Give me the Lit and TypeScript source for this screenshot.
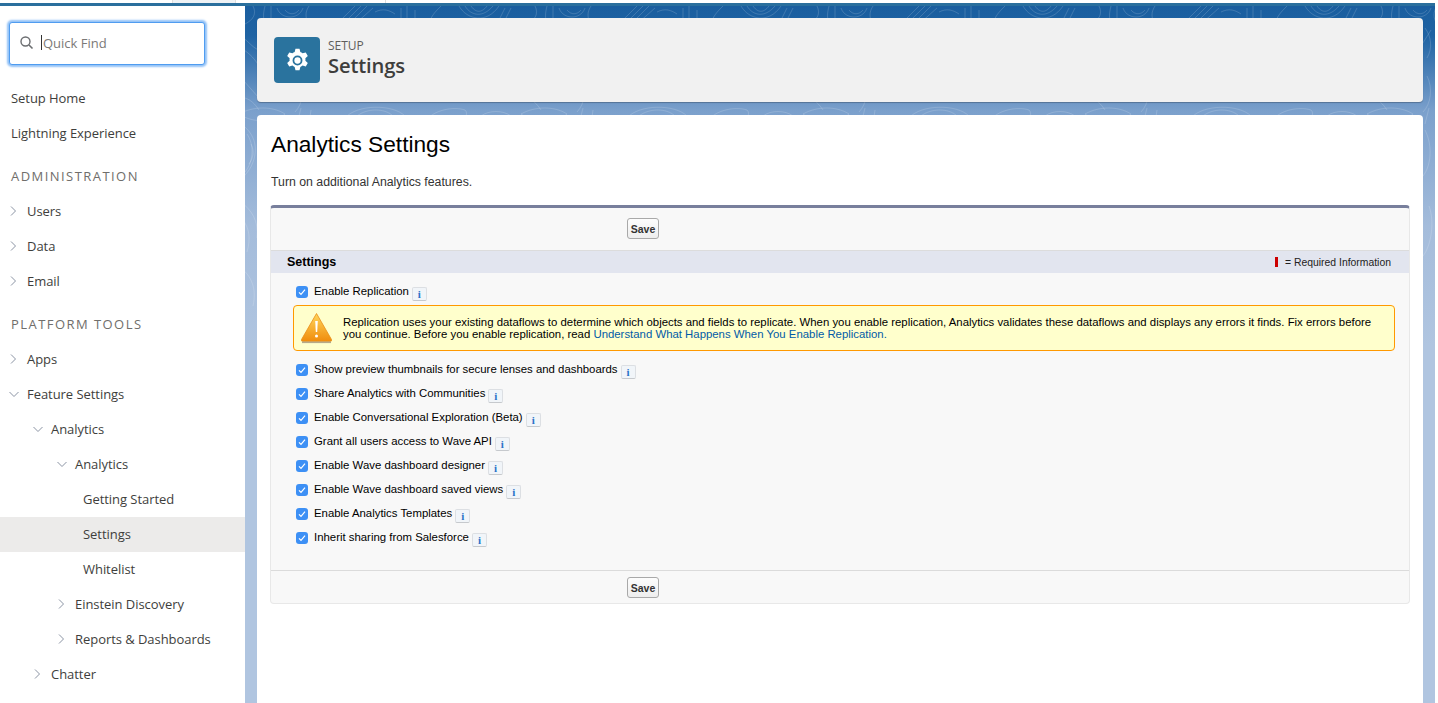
import { LitElement, html, css, svg, nothing } from "lit";
import { customElement } from "lit/decorators.js";

type NavRow = { label: string; level: number; open?: boolean; leaf?: boolean; active?: boolean; heading?: boolean };

const NAV: NavRow[] = [
  { label: "Setup Home", level: 0, leaf: true },
  { label: "Lightning Experience", level: 0, leaf: true },
  { label: "ADMINISTRATION", level: 0, heading: true },
  { label: "Users", level: 0 },
  { label: "Data", level: 0 },
  { label: "Email", level: 0 },
  { label: "PLATFORM TOOLS", level: 0, heading: true },
  { label: "Apps", level: 0 },
  { label: "Feature Settings", level: 0, open: true },
  { label: "Analytics", level: 1, open: true },
  { label: "Analytics", level: 2, open: true },
  { label: "Getting Started", level: 3, leaf: true },
  { label: "Settings", level: 3, leaf: true, active: true },
  { label: "Whitelist", level: 3, leaf: true },
  { label: "Einstein Discovery", level: 2 },
  { label: "Reports & Dashboards", level: 2 },
  { label: "Chatter", level: 1 },
];

const OPTIONS = [
  "Show preview thumbnails for secure lenses and dashboards",
  "Share Analytics with Communities",
  "Enable Conversational Exploration (Beta)",
  "Grant all users access to Wave API",
  "Enable Wave dashboard designer",
  "Enable Wave dashboard saved views",
  "Enable Analytics Templates",
  "Inherit sharing from Salesforce",
];

@customElement("app-root")
export class AppRoot extends LitElement {
  static styles = css`
    :host {
      display: block;
      width: 1438px;
      height: 703px;
      overflow: hidden;
      background: #fff;
      font-family: "Open Sans", "Liberation Sans", sans-serif;
    }
    .tabstrip { display: flex; height: 3px; background: #fff; }
    .tab { width: 62px; margin-left: 172px; background: #eef2f5; border-left: 1px solid #ddd; border-right: 1px solid #ddd; }
    .tab-sep { width: 1px; margin-left: 149px; background: #ddd; }
    .topline { height: 3px; background: #2a6f9d; margin-right: 3px; }
    .layout { display: flex; height: 697px; }

    .sidebar { width: 245px; flex: none; padding-top: 16px; box-sizing: border-box; background: #fff; overflow: hidden; }
    .search {
      display: flex;
      align-items: center;
      width: 196px;
      height: 43px;
      margin: 0 0 16px 9px;
      box-sizing: border-box;
      padding: 0 0 2px 9px;
      background: #fff;
      border: 1px solid #4f9cf0;
      border-radius: 3px;
      box-shadow: 0 0 2px 2px #93c2f7;
      font-size: 13px;
      color: #7b7977;
    }
    .search svg { width: 15px; height: 15px; flex: none; }
    .caret { width: 1px; height: 15px; margin: 0 1px 0 7px; background: #333; }
    .row { display: flex; align-items: center; height: 35px; box-sizing: border-box; padding-bottom: 2px; font-size: 13px; letter-spacing: -0.05px; color: #3e3e3c; white-space: nowrap; }
    .row.active { background: #ecebea; }
    .row svg { width: 8px; height: 10px; flex: none; }
    .lvl-leaf0 { padding-left: 11px; }
    .lvl-0 { padding-left: 9px; }
    .lvl-1 { padding-left: 33px; }
    .lvl-2 { padding-left: 57px; }
    .lvl-3 { padding-left: 83px; }
    .chev { margin-right: 10px; }
    .row.heading { height: 43px; padding: 7px 0 0 11px; font-size: 13px; letter-spacing: 1.45px; color: #706e6b; }

    .main {
      position: relative;
      width: 1190px;
      flex: none;
      box-sizing: border-box;
      padding: 12px 12px 0;
      display: flex;
      flex-direction: column;
      gap: 13px;
      background: linear-gradient(180deg, #1a5e9f 0, #1f63a3 30px, #7ba0cc 105px, #a4bcdb 220px, #b0c5e0 340px);
    }
    .contours { position: absolute; left: 0; top: 0; width: 100%; height: 100%; }
    .page-head {
      position: relative;
      display: flex;
      align-items: center;
      gap: 8px;
      height: 84px;
      flex: none;
      box-sizing: border-box;
      padding-left: 17px;
      background: #f1f1f1;
      border-radius: 4px;
      box-shadow: 0 1px 1px rgba(0, 0, 0, 0.25);
    }
    .head-icon {
      width: 46px;
      height: 46px;
      border-radius: 4px;
      background: #2a739e;
      display: flex;
      align-items: center;
      justify-content: center;
    }
    .head-icon svg { width: 27px; height: 27px; }
    .head-text { padding-bottom: 4px; }
    .eyebrow { font-size: 12px; line-height: 13px; color: #5f5e5c; }
    .head-title { font-size: 20.2px; line-height: 26px; font-weight: 600; letter-spacing: -0.15px; color: #3e3e3c; }

    .content {
      position: relative;
      flex: 1;
      padding: 0 13px 0 14px;
      background: #fff;
      border-radius: 4px 4px 0 0;
      font-family: "Liberation Sans", Arial, sans-serif;
      color: #000;
    }
    h1 { margin: 0; padding-top: 14px; font-size: 22.7px; line-height: 30px; font-weight: 400; }
    .intro { margin: 0; padding-top: 16px; font-size: 12.3px; line-height: 14px; color: #333; }

    .block {
      margin: 16px 0 0 -1px;
      box-sizing: border-box;
      height: 399px;
      background: #f8f8f8;
      border: 1px solid #e8e8e8;
      border-top: 3px solid #787f9c;
      border-radius: 4px;
    }
    .bar { display: flex; height: 43px; box-sizing: border-box; padding: 10px 0 0 356px; border-bottom: 1px solid #dcdcdc; }
    .bar.bottom { height: 33px; padding-top: 6px; border-bottom: none; border-top: 1px solid #dbdbdb; }
    button {
      width: 32px;
      height: 21px;
      padding: 0;
      border: 1px solid #a9a9a9;
      border-radius: 3px;
      background: linear-gradient(#fdfdfd, #eeeeee);
      font: bold 10.5px "Liberation Sans", Arial, sans-serif;
      color: #333;
    }
    .section {
      display: flex;
      align-items: center;
      justify-content: space-between;
      height: 22px;
      padding: 0 18px 0 16px;
      background: #e2e5ef;
    }
    .section h2 { margin: 0; font-size: 12.5px; font-weight: 700; }
    .req { display: flex; align-items: center; gap: 7px; font-size: 10.4px; color: #222; }
    .req i { width: 3px; height: 10px; background: #c00; }

    .options { padding: 6px 14px 21px 25px; }
    .opt { display: flex; align-items: center; height: 24px; font-size: 11.38px; white-space: nowrap; }
    .check {
      width: 12px;
      height: 12px;
      margin: 2px 6px 0 0;
      border-radius: 3px;
      background: #3d90f5;
      display: flex;
      align-items: center;
      justify-content: center;
      flex: none;
    }
    .check svg { width: 8px; height: 8px; }
    .info {
      width: 15px;
      height: 14px;
      margin: 5px 0 0 3px;
      box-sizing: border-box;
      display: flex;
      align-items: center;
      justify-content: center;
      background: #f1f5f9;
      border: 1px solid #dcdfe3;
      border-bottom-color: #c6c9cd;
      border-radius: 2px;
      font: bold 11px "Liberation Serif", serif;
      color: #2a72c8;
    }
    .warn {
      display: flex;
      align-items: center;
      height: 46px;
      box-sizing: border-box;
      margin: 2px 0 6px -3px;
      padding: 0 20px 0 6px;
      background: #ffc;
      border: 1px solid #f90;
      border-radius: 4px;
      font-size: 11.38px;
      line-height: 12px;
      color: #000;
    }
    .warn svg { width: 33px; height: 32px; flex: none; margin-right: 10px; }
    .warn a { color: #015ba7; text-decoration: none; }
  `;

  private chevron(open?: boolean) {
    return open
      ? html`<svg class="chev" viewBox="0 0 10 10" style="width:10px;margin-right:8px"><path d="M0.5 3 L5 7.5 L9.5 3" fill="none" stroke="#8a93a3" stroke-width="1"/></svg>`
      : html`<svg class="chev" viewBox="0 0 8 10"><path d="M2 0.5 L6.5 5 L2 9.5" fill="none" stroke="#8a93a3" stroke-width="1"/></svg>`;
  }

  private renderNav(r: NavRow) {
    if (r.heading) return html`<div class="row heading">${r.label}</div>`;
    const cls = r.leaf && r.level === 0 ? "lvl-leaf0" : `lvl-${r.level}`;
    return html`<div class="row ${cls} ${r.active ? "active" : ""}">
      ${r.leaf ? nothing : this.chevron(r.open)}${r.label}
    </div>`;
  }

  private renderOption(label: string) {
    return html`<div class="opt">
      <span class="check"><svg viewBox="0 0 8 8"><path d="M1 4.4 L3 6.4 L7 1.6" fill="none" stroke="#fff" stroke-width="1.2"/></svg></span>
      <span>${label}</span>
      <span class="info">i</span>
    </div>`;
  }

  private contours() {
    // rough copy of the topographic line texture behind the cards
    return html`<svg class="contours" xmlns="http://www.w3.org/2000/svg">
      <defs>
        <pattern id="topo" x="-12" y="0" width="282" height="340" patternUnits="userSpaceOnUse">
          ${svg`<g fill="none" stroke="#fff" stroke-opacity="0.2" stroke-width="0.8">
            <path d="M20 0 C24 8 20 14 12 18"/>
            <path d="M32 0 C30 8 30 12 32 18"/><path d="M38 0 V16"/>
            <path d="M44 2 C48 14 66 14 70 2"/><path d="M52 4 C56 9 62 9 66 4"/>
            <path d="M76 0 C72 6 72 12 76 18"/>
            <path d="M104 18 L122 0"/><path d="M110 18 L128 0"/><path d="M116 18 L134 0"/><path d="M122 18 L140 2"/>
            <path d="M142 6 C150 2 156 4 162 8"/>
            <path d="M168 2 V18"/><path d="M174 0 V16"/><path d="M182 4 V12"/>
            <path d="M196 18 C198 10 202 6 208 0"/>
            <path d="M226 0 C234 14 254 18 266 0"/><path d="M232 0 C238 10 250 12 260 0"/><path d="M238 0 C242 6 248 8 254 0"/>
            <path d="M272 2 L266 14"/><path d="M278 2 L272 14"/>
            <path d="M6 108 C20 100 40 100 52 108 C44 116 20 118 6 108Z"/>
            <path d="M64 118 L68 102"/><path d="M76 118 L78 104"/>
            <path d="M112 112 C124 98 160 98 172 110"/><path d="M124 110 C134 102 152 102 160 110"/>
            <path d="M190 120 C196 104 220 100 232 104 C238 110 226 120 210 120"/>
            <path d="M248 110 C256 104 270 104 278 110 C270 116 256 116 248 110Z"/>
            <path d="M8 30 C16 36 20 42 26 44"/><path d="M8 42 C14 46 20 50 26 60"/>
            <path d="M10 74 L26 92"/><path d="M12 92 C18 94 22 98 26 104"/>
            <path d="M8 118 C20 126 26 140 20 156 C16 168 8 170 6 180"/>
            <path d="M14 128 C22 140 20 156 12 166"/>
            <path d="M18 138 C22 146 20 152 16 158"/>
            <path d="M8 196 C18 204 26 214 24 232"/><path d="M10 214 C16 222 18 232 14 246"/>
            <path d="M8 262 C18 270 24 282 20 300"/>
            <path d="M64 22 C70 30 72 42 66 52"/><path d="M70 24 L60 40"/>
            <path d="M66 70 C72 82 70 98 62 106"/>
            <path d="M64 124 C72 140 70 160 62 170"/>
            <path d="M68 200 C74 216 70 240 62 250"/>
          </g>`}
        </pattern>
      </defs>
      <rect x="0" y="0" width="100%" height="340" fill="url(#topo)"/>
    </svg>`;
  }

  render() {
    return html`
      <div class="tabstrip"><div class="tab"></div><div class="tab-sep"></div></div>
      <div class="topline"></div>
      <div class="layout">
        <nav class="sidebar">
          <div class="search">
            <svg viewBox="0 0 15 15"><circle cx="6.5" cy="6.5" r="4.5" fill="none" stroke="#6b6d70" stroke-width="1.4"/><path d="M10 10 L13.5 13.5" stroke="#6b6d70" stroke-width="1.6"/></svg>
            <span class="caret"></span><span>Quick Find</span>
          </div>
          ${NAV.map((r) => this.renderNav(r))}
        </nav>
        <main class="main">
          ${this.contours()}
          <header class="page-head">
            <div class="head-icon">
              <svg viewBox="0 0 24 24"><path fill="#fff" fill-rule="evenodd" d="M10.2 1.6 h3.6 l0.7 2.9 a8 8 0 0 1 2 1.15 l2.85 -0.85 l1.8 3.1 l-2.15 2.05 a8 8 0 0 1 0 2.3 l2.15 2.05 l-1.8 3.1 l-2.85 -0.85 a8 8 0 0 1 -2 1.15 l-0.7 2.9 h-3.6 l-0.7 -2.9 a8 8 0 0 1 -2 -1.15 l-2.85 0.85 l-1.8 -3.1 l2.15 -2.05 a8 8 0 0 1 0 -2.3 l-2.15 -2.05 l1.8 -3.1 l2.85 0.85 a8 8 0 0 1 2 -1.15 Z M12 7.6 a4.4 4.4 0 1 0 0 8.8 a4.4 4.4 0 1 0 0 -8.8 Z"/><circle cx="12" cy="12" r="2.8" fill="#fff"/></svg>
            </div>
            <div class="head-text">
              <div class="eyebrow">SETUP</div>
              <div class="head-title">Settings</div>
            </div>
          </header>
          <section class="content">
            <h1>Analytics Settings</h1>
            <p class="intro">Turn on additional Analytics features.</p>
            <div class="block">
              <div class="bar"><button>Save</button></div>
              <div class="section">
                <h2>Settings</h2>
                <div class="req"><i></i><span>= Required Information</span></div>
              </div>
              <div class="options">
                ${this.renderOption("Enable Replication")}
                <div class="warn">
                  <svg viewBox="0 0 33 32">
                    <defs><linearGradient id="wg" x1="0" y1="0" x2="0" y2="1"><stop offset="0" stop-color="#ffd65c"/><stop offset="1" stop-color="#f08c0c"/></linearGradient></defs>
                    <path d="M16.5 1.5 L31.5 27.5 Q32 29.5 30 29.5 H3 Q1 29.5 1.5 27.5 Z" fill="url(#wg)" stroke="#e98d16" stroke-width="0.8" stroke-linejoin="round"/>
                    <rect x="2" y="29.5" width="29" height="1.6" fill="#b5a98a"/>
                    <path d="M15.2 9 h2.6 l-0.6 11 h-1.4 Z" fill="#fff"/><circle cx="16.5" cy="24" r="1.5" fill="#fff"/>
                  </svg>
                  <div>Replication uses your existing dataflows to determine which objects and fields to replicate. When you enable replication, Analytics validates these dataflows and displays any errors it finds. Fix errors before you continue. Before you enable replication, read <a>Understand What Happens When You Enable Replication.</a></div>
                </div>
                ${OPTIONS.map((o) => this.renderOption(o))}
              </div>
              <div class="bar bottom"><button>Save</button></div>
            </div>
          </section>
        </main>
      </div>
    `;
  }
}
